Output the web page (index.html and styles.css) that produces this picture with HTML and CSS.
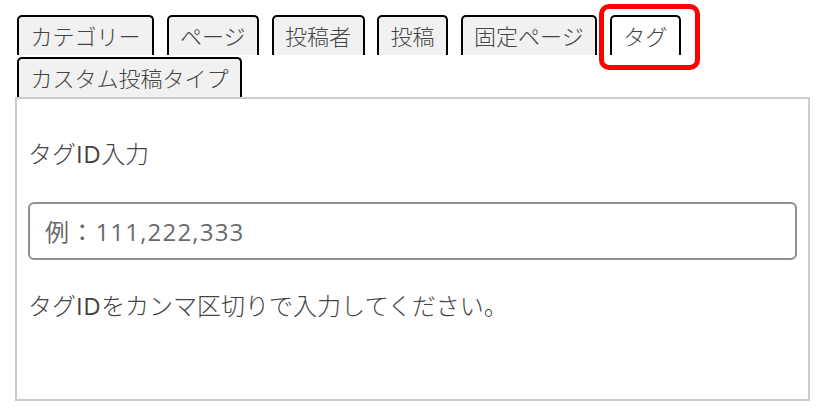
FILE: index.html
```html
<!DOCTYPE html>
<html lang="ja">
<head>
    <meta charset="UTF-8">
    <meta name="viewport" content="width=device-width, initial-scale=1.0">
    <link rel="stylesheet" href="styles.css">
</head>
<body>
    <div class="tag-settings">
        <ul class="tab-list">
            <li class="tab">カテゴリー</li>
            <li class="tab">ページ</li>
            <li class="tab">投稿者</li>
            <li class="tab">投稿</li>
            <li class="tab">固定ページ</li>
            <li class="tab tab-active">タグ<span class="tab-mark"></span></li>
            <li class="tab">カスタム投稿タイプ</li>
        </ul>
        <div class="tab-panel">
            <p class="field-label">タグ<span class="latin">ID</span>入力</p>
            <input class="field-input" type="text" placeholder="例：111,222,333">
            <p class="field-help">タグ<span class="latin">ID</span>をカンマ区切りで入力してください。</p>
        </div>
    </div>
</body>
</html>
```

FILE: styles.css
```css
body {
    margin: 0;
    background-color: #fff;
}

.tag-settings {
    padding: 15px 0 0 15px;
    font-family: 'Open Sans', 'Noto Sans CJK JP', sans-serif;
    font-weight: 300;
    color: #444;
}

.latin {
    font-weight: 400;
    letter-spacing: 0.5px;
}

.tab-list {
    display: flex;
    flex-wrap: wrap;
    column-gap: 12.5px;
    row-gap: 2px;
    width: 700px;
    margin: 0 0 0 2px;
    padding: 0;
    list-style: none;
}

.tab {
    position: relative;
    height: 40px;
    box-sizing: border-box;
    padding: 0 11.5px;
    border: 2px solid #000;
    border-bottom: none;
    border-radius: 5px 5px 0 0;
    background-color: #f1f1f1;
    font-size: 22px;
    line-height: 39px;
    color: #444;
}

.tab-active {
    background-color: #fff;
}

.tab-mark {
    position: absolute;
    top: -13px;
    left: -13px;
    width: 101px;
    height: 66px;
    box-sizing: border-box;
    border: 5px solid #f00;
    border-radius: 10px;
}

.tab-panel {
    width: 795px;
    height: 304px;
    box-sizing: border-box;
    padding: 37px 11px 0;
    border: 2px solid #ccc;
}

.field-label,
.field-help {
    margin: 0;
    font-size: 24px;
    line-height: 36px;
}

.field-input {
    display: block;
    width: 100%;
    height: 58px;
    box-sizing: border-box;
    margin-top: 30px;
    padding: 0 15px;
    border: 2px solid #8c8f94;
    border-radius: 6px;
    font-family: inherit;
    font-size: 24px;
    letter-spacing: 1.2px;
    color: #444;
}

.field-input::placeholder {
    color: #6a6a6a;
}

.field-help {
    margin-top: 28px;
}
```
